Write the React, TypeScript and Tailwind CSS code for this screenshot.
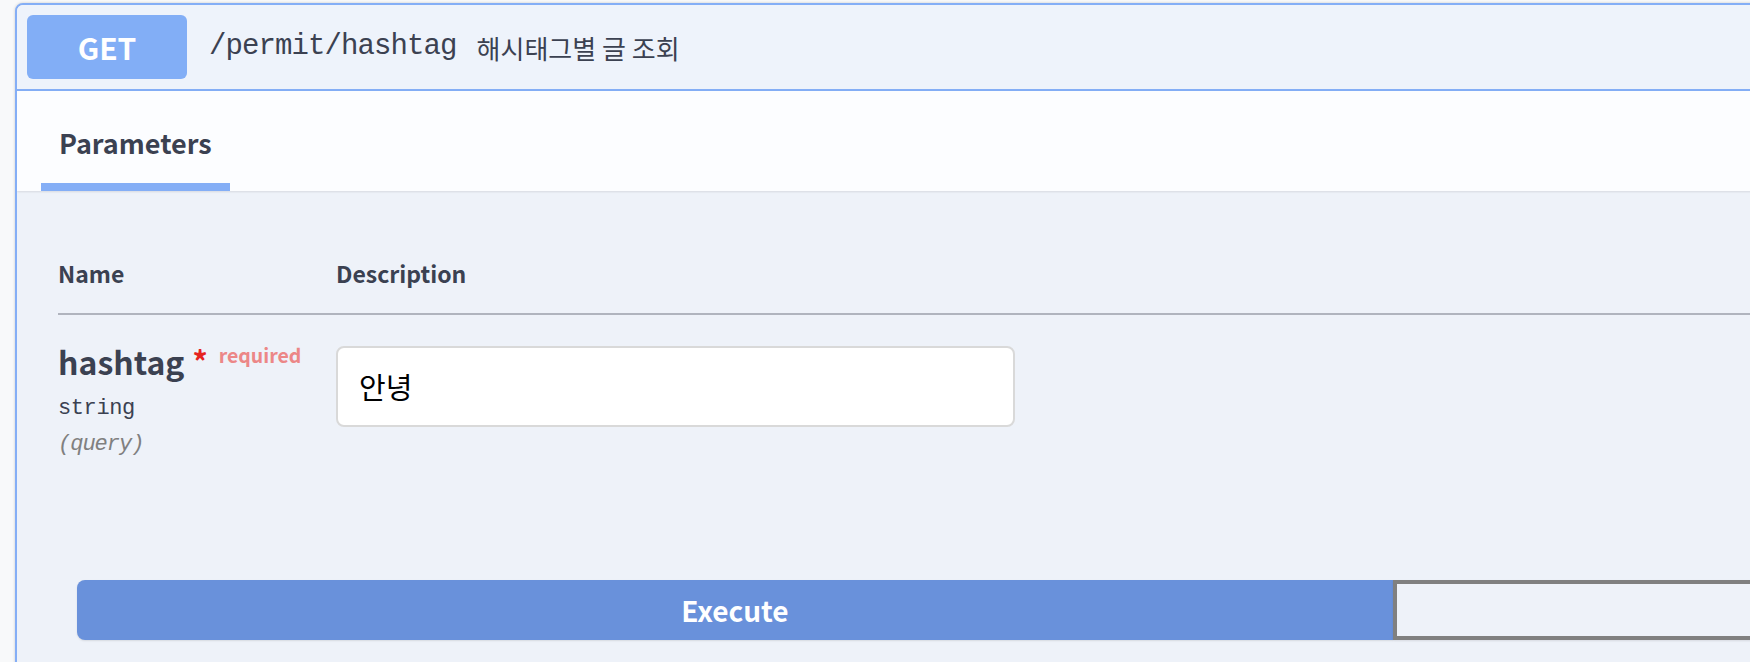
import React from "react";

const sans = "font-['Noto_Sans_CJK_KR','Noto_Sans',sans-serif]";
const mono = "font-['Liberation_Mono',monospace]";

export default function App() {
  return (
    <div className="w-[1750px] h-[662px] overflow-hidden bg-[#f8f9fa] pt-[3px] pl-[15px]">
      <div className="w-[1800px] h-[700px] rounded-[8px] border-2 border-[#84aef6] bg-[#eef2f9] shadow-[0_0_3px_rgba(0,0,0,0.19)] overflow-hidden">
        {/* Summary header */}
        <div className="flex items-center h-[86px] px-[10px] bg-[#eef3fb] border-b-2 border-[#84aef6]">
          <div className={`${sans} w-[160px] h-[64px] rounded-[6px] bg-[#82aef6] flex items-center justify-center text-white font-bold text-[30px] leading-none`}>
            GET
          </div>
          <span className={`${mono} pl-[22px] pr-[20px] text-[29px] tracking-[-0.9px] text-[#3b4151]`}>
            /permit/hashtag
          </span>
          <span className={`${sans} text-[26px] text-[#3b4151]`}>해시태그별 글 조회</span>
        </div>

        {/* Tab header */}
        <div className="h-[100px] bg-[#fcfdff] shadow-[0_1px_2px_rgba(0,0,0,0.1)] flex items-end pl-[24px] relative">
          <div className={`${sans} h-full px-[18px] pt-[12px] flex items-center border-b-[8px] border-[#84aef6] text-[27px] font-bold text-[#3b4151]`}>
            Parameters
          </div>
        </div>

        {/* Parameters table */}
        <div className="px-[41px] pt-[60px]">
          <div className={`${sans} flex h-[64px] items-center pb-[18px] border-b-2 border-[#b0b4be] text-[23px] font-bold text-[#3b4151]`}>
            <div className="w-[278px]">Name</div>
            <div>Description</div>
          </div>
          <div className="flex pt-[31px]">
            <div className="w-[278px] flex flex-col">
              <div className="flex items-start">
                <span className={`${sans} text-[32px] font-bold text-[#3b4151] leading-[30px]`}>hashtag</span>
                <span className={`${sans} text-[30px] font-bold text-[#e5231f] leading-[28px] pl-[8px]`}>*</span>
                <span className={`${sans} text-[19.5px] font-bold text-[#ec8787] leading-[18px] pl-[11px]`}>required</span>
              </div>
              <div className={`${mono} text-[22px] tracking-[-0.4px] text-[#3b4151] mt-[18px] leading-[30px]`}>string</div>
              <div className={`${mono} italic text-[22px] tracking-[-1px] text-[#808080] mt-[6px] leading-[30px]`}>(query)</div>
            </div>
            <div className="w-[679px] h-[81px] bg-white border-2 border-[#d9d9d9] rounded-[8px] flex items-center px-[21px]">
              <span className={`${sans} text-[29px] text-black leading-none`}>안녕</span>
            </div>
          </div>
        </div>

        {/* Execute */}
        <div className="flex pl-[60px] mt-[120px]">
          <div className={`${sans} w-[1316px] h-[60px] rounded-l-[8px] bg-[#6991db] flex items-center justify-center text-white font-bold text-[28px] shadow-[0_1px_2px_rgba(0,0,0,0.1)]`}>
            Execute
          </div>
          <div className="flex-1 h-[60px] border-4 border-[#808080] bg-[#eef2f9] shadow-[0_1px_2px_rgba(0,0,0,0.1)]"></div>
        </div>
      </div>
    </div>
  );
}
